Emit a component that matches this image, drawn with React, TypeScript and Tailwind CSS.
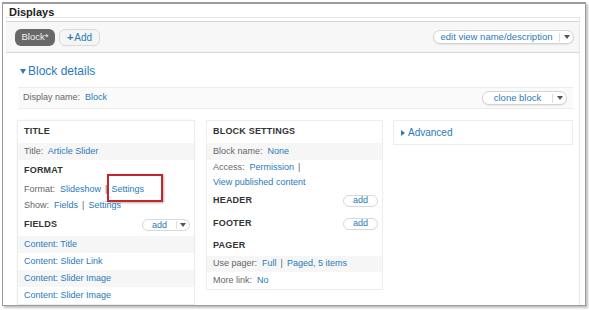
import React from 'react';

const font = "font-['Liberation_Sans',Arial,sans-serif]";

function Caret() {
  return <span className="inline-block w-0 h-0 border-x-[3px] border-x-transparent border-t-[4px] border-t-[#555]" />;
}

function DropButton({ label, w }: { label: string; w: string }) {
  return (
    <div className={`flex items-center h-[14px] ${w} rounded-full border border-[#d4d4d4] bg-white shadow-[0_1px_1px_rgba(0,0,0,0.08)]`}>
      <span className="flex-1 text-center text-[9.5px] leading-none text-[#2a7ab8]">{label}</span>
      <span className="h-[9px] border-l border-[#ddd]" />
      <span className="w-[13px] flex justify-center"><Caret /></span>
    </div>
  );
}

function AddButton({ caret }: { caret?: boolean }) {
  return (
    <div className="flex items-center h-[12px] rounded-full border border-[#d8d8d8] bg-white">
      <span className="px-[9px] text-[9px] leading-none text-[#2a7ab8]">add</span>
      {caret && (
        <>
          <span className="h-[8px] border-l border-[#ddd]" />
          <span className="w-[12px] flex justify-center"><Caret /></span>
        </>
      )}
    </div>
  );
}

function Head({ children, right, h = 'h-[22px]' }: { children: React.ReactNode; right?: React.ReactNode; h?: string }) {
  return (
    <div className={`flex items-center justify-between ${h} pl-[6px] pr-[4px]`}>
      <span className="text-[9px] font-bold text-[#333] tracking-[0.2px]">{children}</span>
      {right}
    </div>
  );
}

function Row({ children, gray, h = 'h-[17px]' }: { children: React.ReactNode; gray?: boolean; h?: string }) {
  return (
    <div className={`flex items-center ${h} px-[6px] text-[9px] text-[#666] ${gray ? 'bg-[#f6f6f6]' : ''}`}>
      <span className="whitespace-nowrap">{children}</span>
    </div>
  );
}

const A = ({ children }: { children: React.ReactNode }) => <span className="text-[#2a7ab8]">{children}</span>;
const Sep = () => <span className="text-[#666] px-[4px]">|</span>;

export default function App() {
  return (
    <div className={`w-[589px] h-[310px] bg-white ${font} pl-[2px] pt-[2px]`}>
      <div className="w-[584px] h-[304px] border border-t-2 border-[#9c9c9c] shadow-[2px_2px_2px_rgba(0,0,0,0.25)] pl-[3px] pr-[5px] overflow-hidden">
        <div className="h-[13px] pt-[3px] pl-[3px]">
          <div className="text-[11px] font-bold leading-none text-[#222]">Displays</div>
        </div>
        <div className="border-t border-r border-[#e6e6e6] h-full pt-[3px]">
          <div className="h-[32px] border-y border-[#d6d6d6] bg-[#f7f7f7] flex items-center justify-between pl-[9px] pr-[5px]">
            <div className="flex items-center gap-[4px]">
              <div className="h-[17px] w-[40px] rounded-[6px] bg-[#686868] flex items-center justify-center text-[9.5px] text-[#f2f2f2]">Block*</div>
              <div className="h-[17px] w-[41px] rounded-[6px] bg-[#f5f5f5] border border-[#dadada] flex items-center justify-center text-[10px] text-[#2a7ab8]">
                <span className="font-bold text-[11px] leading-none mr-[1px]">+</span>Add
              </div>
            </div>
            <DropButton label="edit view name/description" w="w-[141px]" />
          </div>

          <div className="pl-[11px] pr-[6px]">
            <div className="mt-[11px] h-[14px] flex items-center text-[12px] text-[#2a7ab8]">
              <span className="inline-block mr-[2px] ml-[3px] w-0 h-0 border-x-[3px] border-x-transparent border-t-[5px] border-t-[#2a7ab8]" />
              Block details
            </div>
            <div className="mt-[9px] ml-[1px] h-[22px] border-y border-[#ececec] bg-[#fafafa] flex items-center justify-between pl-[5px] pr-[6px]">
              <span className="text-[9px] text-[#666]">Display name:&nbsp; <A>Block</A></span>
              <DropButton label="clone block" w="w-[85px]" />
            </div>

            <div className="mt-[11px] flex items-start">
              <div className="relative w-[178px] border border-[#ececec] shadow-[0_0_2px_rgba(0,0,0,0.05)]">
                <Head>TITLE</Head>
                <Row gray>Title:&nbsp; <A>Article Slider</A></Row>
                <Head>FORMAT</Head>
                <Row h="h-[16px]">Format:&nbsp; <A>Slideshow</A><Sep /><A>Settings</A></Row>
                <Row h="h-[16px]">Show:&nbsp; <A>Fields</A><Sep /><A>Settings</A></Row>
                <Head right={<AddButton caret />}>FIELDS</Head>
                <Row gray><A>Content: Title</A></Row>
                <Row><A>Content: Slider Link</A></Row>
                <Row gray><A>Content: Slider Image</A></Row>
                <Row><A>Content: Slider Image</A></Row>
                <div className="absolute left-[89px] top-[53px] w-[56px] h-[28px] border-2 border-[#c1272d] shadow-[1px_1px_2px_rgba(0,0,0,0.3)]" />
              </div>

              <div className="ml-[11px] w-[177px] border border-[#ececec]">
                <Head>BLOCK SETTINGS</Head>
                <Row gray>Block name:&nbsp; <A>None</A></Row>
                <Row h="h-[16px]">Access:&nbsp; <A>Permission</A><Sep /></Row>
                <Row h="h-[13px]"><A>View published content</A></Row>
                <Head h="h-[23px]" right={<AddButton />}>HEADER</Head>
                <Head h="h-[23px]" right={<AddButton />}>FOOTER</Head>
                <Head h="h-[21px]">PAGER</Head>
                <Row gray h="h-[16px]">Use pager:&nbsp; <A>Full</A><Sep /><A>Paged, 5 items</A></Row>
                <Row>More link:&nbsp; <A>No</A></Row>
              </div>

              <div className="ml-[10px] w-[180px] h-[25px] border border-[#ececec] flex items-center pl-[7px] text-[10px] text-[#2a7ab8]">
                <span className="inline-block mr-[3px] w-0 h-0 border-y-[3px] border-y-transparent border-l-[4px] border-l-[#2a7ab8]" />
                Advanced
              </div>
            </div>
          </div>
        </div>
      </div>
    </div>
  );
}
